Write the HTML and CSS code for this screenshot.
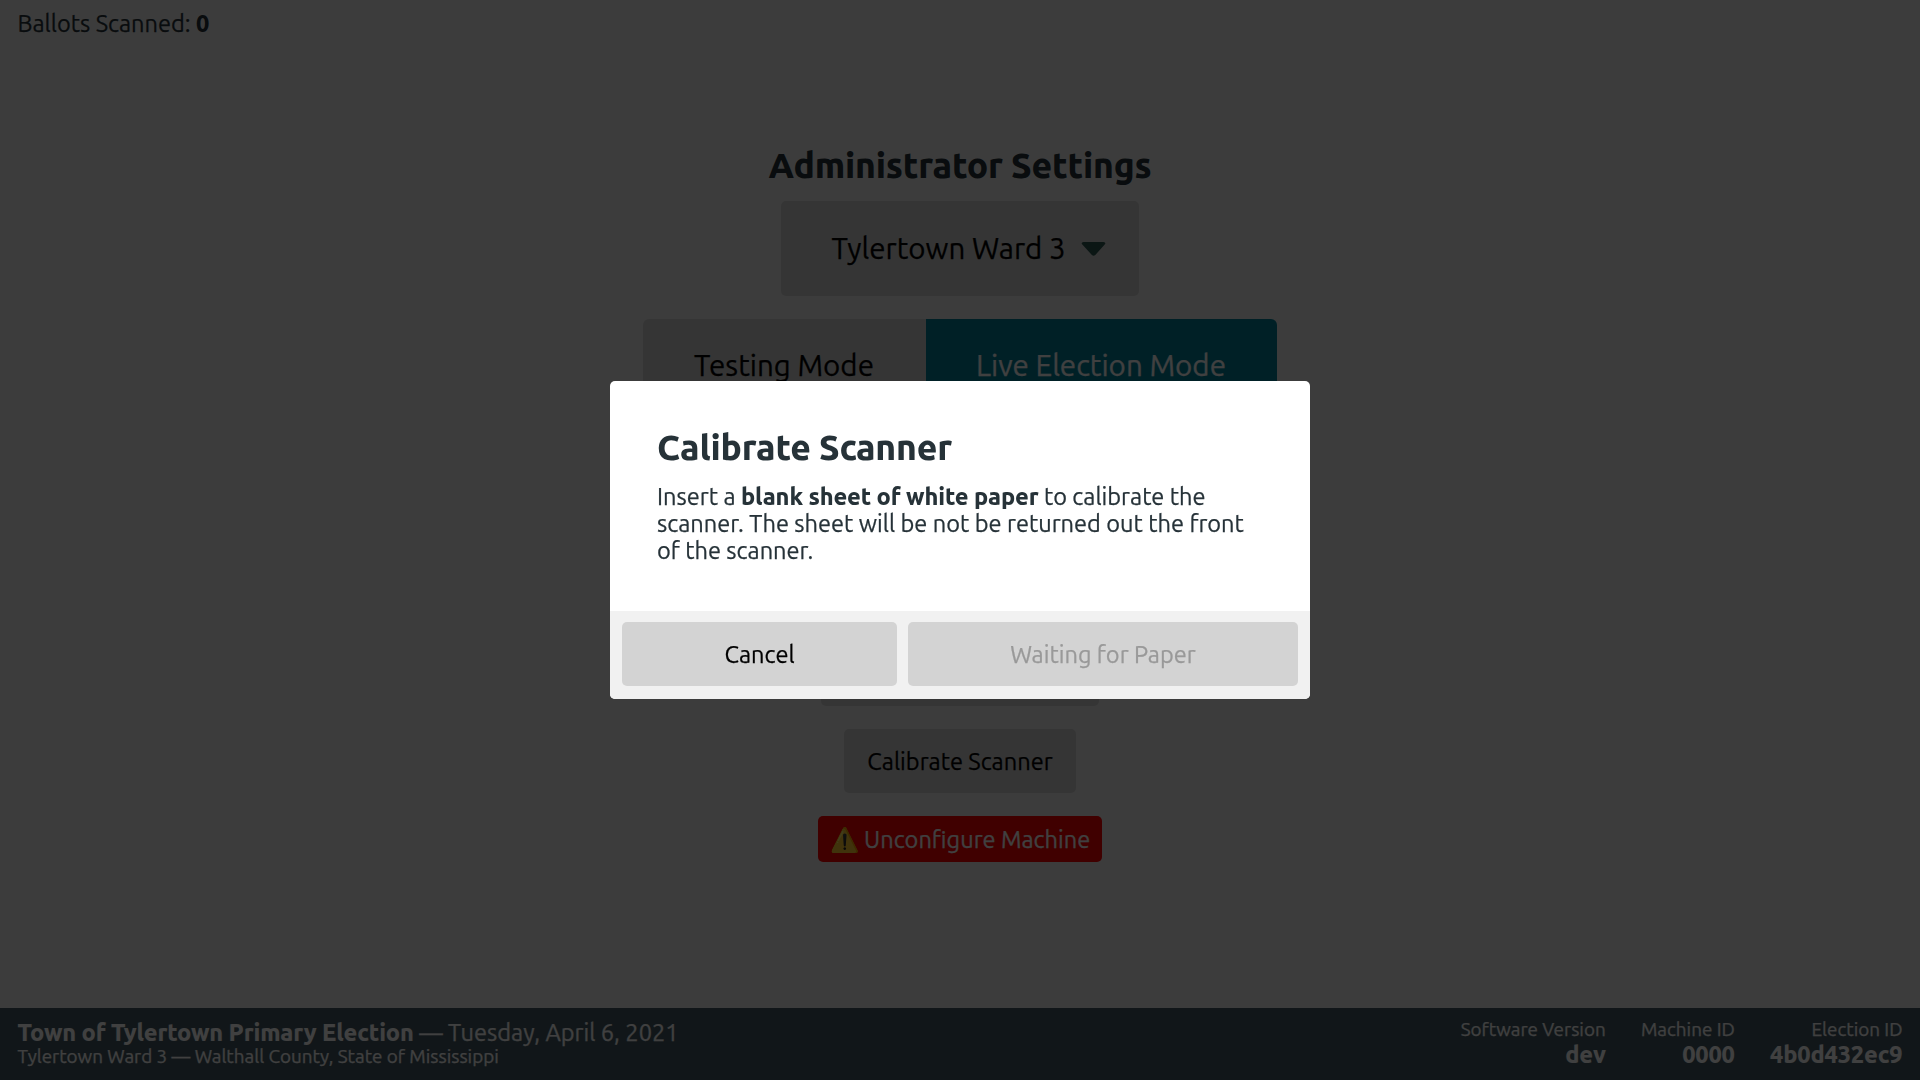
FILE: index.html
```html
<!DOCTYPE html>
<html lang="en">
<head>
<meta charset="utf-8">
<title>Administrator Settings</title>
<link rel="stylesheet" href="styles.css">
</head>
<body>
<div class="screen">
  <header class="counter">Ballots Scanned: <strong>0</strong></header>
  <main class="main">
    <h1 class="heading">Administrator Settings</h1>
    <button class="button select">Tylertown Ward 3
      <svg class="caret" viewBox="0 0 24 14"><path d="M2 0H22Q25 0.500 23.200 2.500L13.800 13Q12 14.600 10.400 13L0.800 2.500Q-1 0.500 2 0Z"/></svg>
    </button>
    <div class="segmented">
      <button class="segment">Testing Mode</button>
      <button class="segment active">Live Election Mode</button>
    </div>
    <button class="button wide"></button>
    <button class="button">Calibrate Scanner</button>
    <button class="button danger">⚠️ Unconfigure Machine</button>
  </main>
  <footer class="footer">
    <div class="election">
      <div class="line"><strong>Town of Tylertown Primary Election</strong> — Tuesday, April 6, 2021</div>
      <div class="small">Tylertown Ward 3 — Walthall County, State of Mississippi</div>
    </div>
    <div class="info"><span class="small">Software Version</span><strong>dev</strong></div>
    <div class="info"><span class="small">Machine ID</span><strong>0000</strong></div>
    <div class="info"><span class="small">Election ID</span><strong>4b0d432ec9</strong></div>
  </footer>
</div>
<div class="overlay">
  <div class="modal" role="dialog">
    <div class="content">
      <h2 class="title">Calibrate Scanner</h2>
      <p class="text">Insert a <strong>blank sheet of white paper</strong> to calibrate the scanner. The sheet will be not be returned out the front of the scanner.</p>
    </div>
    <div class="actions">
      <button class="action">Cancel</button>
      <button class="action waiting" disabled>Waiting for Paper</button>
    </div>
  </div>
</div>
</body>
</html>
```
FILE: styles.css
```css
* { box-sizing: border-box; }
body {
  margin: 0;
  overflow: hidden;
  background: #f0f0f0;
  color: #263238;
  font: 430 23.600px/27px "Ubuntu", "Noto Sans", sans-serif;
  -webkit-text-stroke-width: .25px;
}
button { border: 0; font: inherit; white-space: nowrap; }
strong, h1, h2 { font-weight: 760; letter-spacing: -.006em; -webkit-text-stroke-width: 0; }
.screen { display: flex; flex-direction: column; height: 1080px; }
.counter { height: 60px; padding: 10px 17.500px; }
.main {
  flex: 1;
  display: flex;
  flex-direction: column;
  align-items: center;
  padding-top: 85px;
}
.heading { margin: 0 0 14.500px; font-size: 35.440px; line-height: 41.500px; }
.button {
  height: 64px;
  margin-bottom: 23px;
  padding: 0 23.600px;
  border-radius: 5px;
  background: #d3d3d3;
  color: #000;
}
.select {
  display: flex;
  align-items: center;
  gap: 15px;
  width: 358px;
  height: 95px;
  margin-bottom: 23px;
  padding: 0 0 0 50.500px;
  font-size: 29.500px;
}
.caret { width: 25px; height: 14px; fill: #2e5850; }
.segmented { display: flex; width: 634px; height: 95px; margin-bottom: 228px; border-radius: 6px; overflow: hidden; }
.segment { width: 283px; padding: 0 1px 2px 0; background: #d3d3d3; color: #000; font-size: 29.500px; }
.segment.active { flex: 1; background: #028099; color: #fff; }
.wide { width: 278px; }
.danger { height: 46px; padding: 0 12px; background: #f00; color: #fff; }
.footer {
  display: flex;
  gap: 35.200px;
  height: 72px;
  padding: 11px 17.500px 0;
  background: #455a64;
  color: #fff;
}
.election { flex: 1; }
.small { font-size: 18.880px; line-height: 20px; }
.info { display: flex; flex-direction: column; align-items: flex-end; gap: 2px; }
.overlay {
  position: fixed;
  inset: 0;
  display: flex;
  align-items: center;
  justify-content: center;
  background: rgba(0, 0, 0, .75);
}
.modal { width: 700px; border-radius: 5px; overflow: hidden; background: #fff; }
.content { height: 230px; padding: 46px 47px 0; }
.title { margin: 0 0 15px; font-size: 35.440px; line-height: 41px; }
.text { margin: 0; }
.actions { display: flex; gap: 11px; height: 87.600px; padding: 11px 12px 12px; background: #f1f1f1; }
.action { width: 275px; height: 64px; border-radius: 5px; background: #d3d3d3; color: #000; }
.waiting { flex: 1; color: #999; }
```
